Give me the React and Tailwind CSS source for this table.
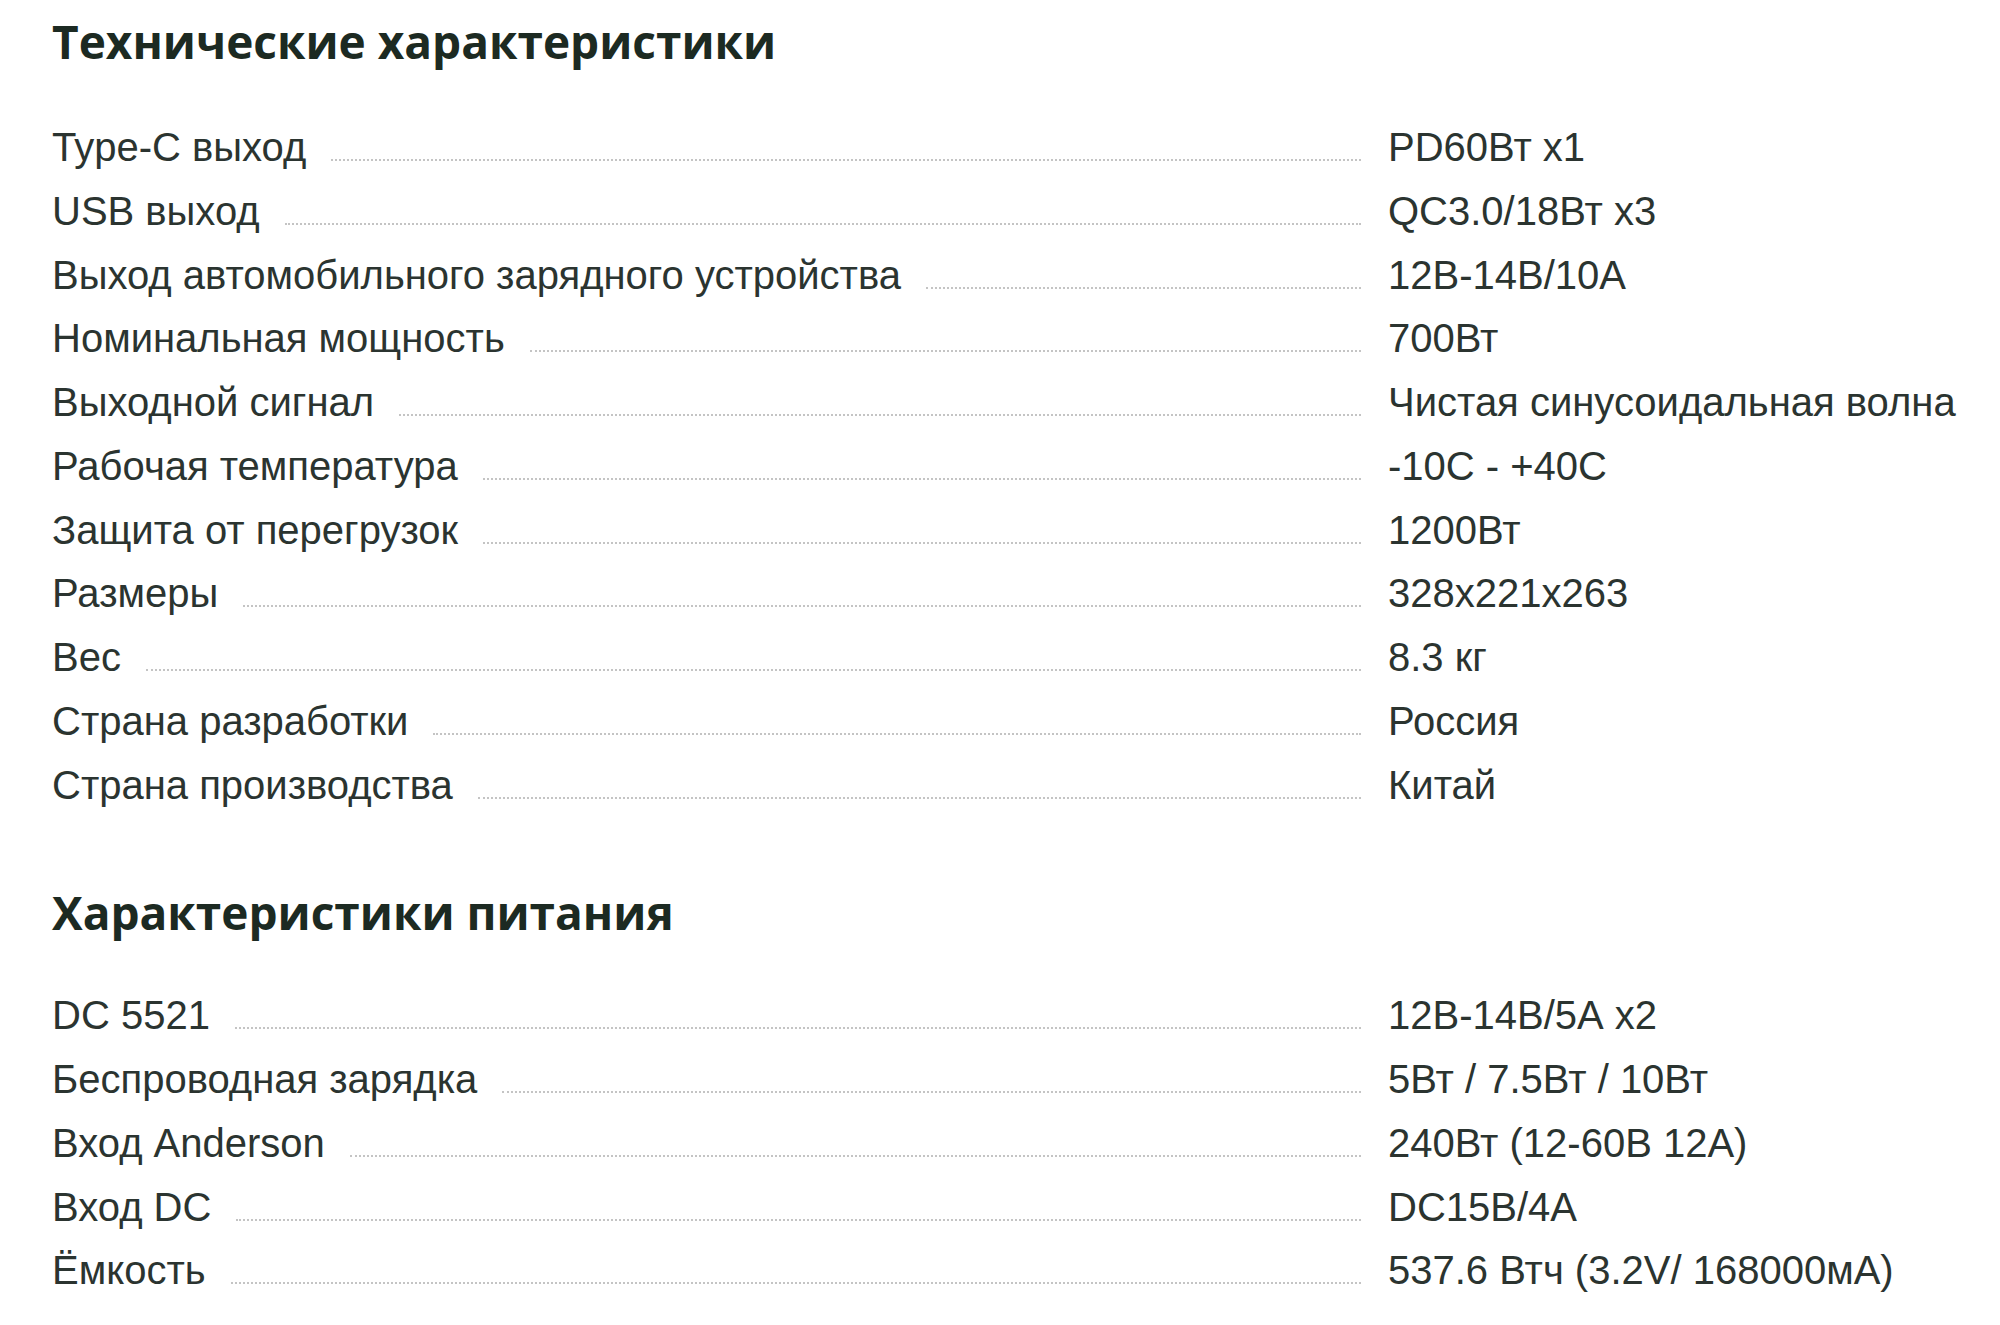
import React from 'react';

const techSpecs = [
    ['Type-C выход', 'PD60Вт x1'],
    ['USB выход', 'QC3.0/18Вт x3'],
    ['Выход автомобильного зарядного устройства', '12В-14В/10А'],
    ['Номинальная мощность', '700Вт'],
    ['Выходной сигнал', 'Чистая синусоидальная волна'],
    ['Рабочая температура', '-10С - +40С'],
    ['Защита от перегрузок', '1200Вт'],
    ['Размеры', '328x221x263'],
    ['Вес', '8.3 кг'],
    ['Страна разработки', 'Россия'],
    ['Страна производства', 'Китай'],
];

const powerSpecs = [
    ['DC 5521', '12В-14В/5А x2'],
    ['Беспроводная зарядка', '5Вт / 7.5Вт / 10Вт'],
    ['Вход Anderson', '240Вт (12-60В 12А)'],
    ['Вход DC', 'DC15В/4А'],
    ['Ёмкость', '537.6 Втч (3.2V/ 168000мА)'],
];

function SpecRow({label, value}) {
    return (
        <div className="flex items-baseline h-[63.75px] leading-[63.75px]">
            <div className="flex items-baseline w-[1309px] shrink-0">
                <span className="whitespace-nowrap">{label}</span>
                <div className="flex-1 ml-[25px] h-0 border-b-2 border-dotted border-[#c4c4c4]"></div>
            </div>
            <span className="ml-[27px] whitespace-nowrap">{value}</span>
        </div>
    );
}

function Heading({children}) {
    return (
        <h2 className="text-[46px] leading-[52px] font-bold text-[#1c2a22] font-['Open_Sans',sans-serif]">
            {children}
        </h2>
    );
}

function App() {
    return (
        <div className="min-h-screen bg-white pl-[52px] pt-[15px] text-[#2b3430] text-[40px] font-['Liberation_Sans',Arial,sans-serif]">
            <Heading>Технические характеристики</Heading>
            <div className="mt-[49px]">
                {techSpecs.map(([l, v]) => <SpecRow key={l} label={l} value={v}/>)}
            </div>

            <div className="mt-[69px]">
                <Heading>Характеристики питания</Heading>
            </div>
            <div className="mt-[46px]">
                {powerSpecs.map(([l, v]) => <SpecRow key={l} label={l} value={v}/>)}
            </div>
        </div>
    );
}

export default App;
